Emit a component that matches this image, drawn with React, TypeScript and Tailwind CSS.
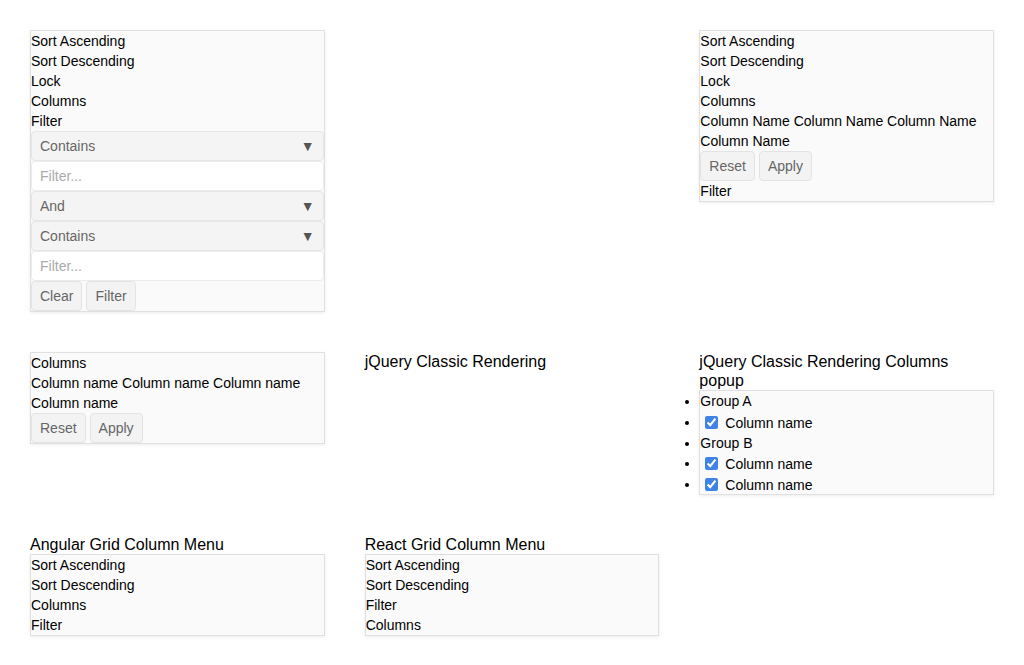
import React from "react";

const boxCls =
  "border border-[#e0e0e0] bg-[#fafafa] shadow-[0_1px_3px_rgba(0,0,0,0.08)] text-[14px] leading-[20px] text-[#000]";

function Item({ children }: { children: React.ReactNode }) {
  return <div className="leading-[20px]">{children}</div>;
}

function Btn({ children }: { children: React.ReactNode }) {
  return (
    <button className="h-[30px] px-[8px] border border-[#e3e3e3] bg-[#f3f3f3] rounded-[4px] text-[#666] text-[14px] leading-[20px]">
      {children}
    </button>
  );
}

function Select({ label }: { label: string }) {
  return (
    <div className="h-[30px] flex items-center justify-between pl-[8px] pr-[8px] border border-[#e6e6e6] bg-[#f4f4f4] rounded-[4px] text-[#666]">
      <span>{label}</span>
      <span className="text-[14px] text-[#555]">▼</span>
    </div>
  );
}

function Input() {
  return (
    <div className="h-[30px] flex items-center pl-[8px] border border-[#ececec] bg-white rounded-[4px] text-[#aaa]">
      Filter...
    </div>
  );
}

function Title({ children }: { children: React.ReactNode }) {
  return <div className="text-[16px] leading-[19px] text-[#000]">{children}</div>;
}

function CheckRow() {
  return (
    <li className="h-[21px]">
      <label className="inline-flex items-center h-[21px] align-top">
        <input
          type="checkbox"
          defaultChecked
          className="accent-[#3e83e5] w-[13px] h-[13px] ml-[5px] mr-[7px] my-0"
        />
        Column name
      </label>
    </li>
  );
}

export default function App() {
  return (
    <div
      className="w-[1024px] min-h-[665px] bg-white p-[30px] grid grid-cols-3 gap-x-[40px] gap-y-[40px] items-start content-start"
      style={{ fontFamily: "'Liberation Sans', Arial, sans-serif" }}
    >
      {/* Row 1 col 1 */}
      <div className={boxCls}>
        <Item>Sort Ascending</Item>
        <Item>Sort Descending</Item>
        <Item>Lock</Item>
        <Item>Columns</Item>
        <Item>Filter</Item>
        <Select label="Contains" />
        <Input />
        <Select label="And" />
        <Select label="Contains" />
        <Input />
        <div className="flex gap-[4px]">
          <Btn>Clear</Btn>
          <Btn>Filter</Btn>
        </div>
      </div>
      <div />
      {/* Row 1 col 3 */}
      <div className={boxCls}>
        <Item>Sort Ascending</Item>
        <Item>Sort Descending</Item>
        <Item>Lock</Item>
        <Item>Columns</Item>
        <Item>Column Name Column Name Column Name Column Name</Item>
        <div className="flex gap-[4px]">
          <Btn>Reset</Btn>
          <Btn>Apply</Btn>
        </div>
        <Item>Filter</Item>
      </div>

      {/* Row 2 */}
      <div className={boxCls}>
        <Item>Columns</Item>
        <Item>Column name Column name Column name Column name</Item>
        <div className="flex gap-[4px]">
          <Btn>Reset</Btn>
          <Btn>Apply</Btn>
        </div>
      </div>
      <div>
        <Title>jQuery Classic Rendering</Title>
      </div>
      <div>
        <Title>jQuery Classic Rendering Columns popup</Title>
        <ul className={boxCls + " list-disc"}>
          <li className="leading-[21px] h-[21px]">Group A</li>
          <CheckRow />
          <li className="leading-[20px]">Group B</li>
          <CheckRow />
          <li className="h-[20px]">
            <label className="inline-flex items-center h-[21px] align-top">
              <input
                type="checkbox"
                defaultChecked
                className="accent-[#3e83e5] w-[13px] h-[13px] ml-[5px] mr-[7px] my-0"
              />
              Column name
            </label>
          </li>
        </ul>
      </div>

      {/* Row 3 */}
      <div>
        <Title>Angular Grid Column Menu</Title>
        <div className={boxCls}>
          <Item>Sort Ascending</Item>
          <Item>Sort Descending</Item>
          <Item>Columns</Item>
          <Item>Filter</Item>
        </div>
      </div>
      <div>
        <Title>React Grid Column Menu</Title>
        <div className={boxCls}>
          <Item>Sort Ascending</Item>
          <Item>Sort Descending</Item>
          <Item>Filter</Item>
          <Item>Columns</Item>
        </div>
      </div>
      <div />
    </div>
  );
}
